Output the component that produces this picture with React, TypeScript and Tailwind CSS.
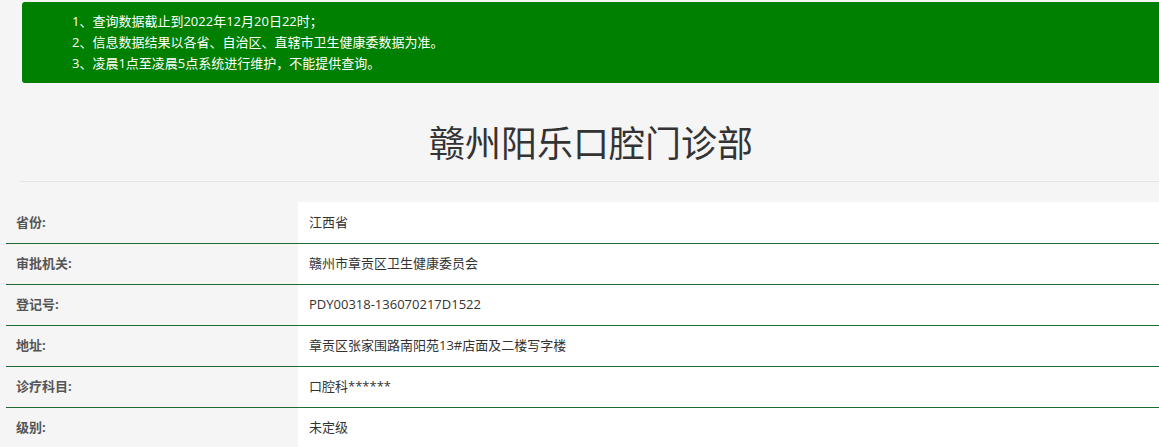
const rows: [string, string][] = [
  ['省份:', '江西省'],
  ['审批机关:', '赣州市章贡区卫生健康委员会'],
  ['登记号:', 'PDY00318-136070217D1522'],
  ['地址:', '章贡区张家围路南阳苑13#店面及二楼写字楼'],
  ['诊疗科目:', '口腔科******'],
  ['级别:', '未定级'],
]

export default function App() {
  return (
    <div
      className="h-[447px] w-[1159px] overflow-hidden bg-[#f5f5f5] text-[#333]"
      style={{ fontFamily: '"Open Sans", "Noto Sans CJK SC", sans-serif' }}
    >
      <div className="ml-[6px] w-[1170px] pt-[2px]">
        <div className="ml-[16px] rounded-[3px] bg-[#008000] pl-[50px] py-[9px] text-[13px] leading-[21px] text-white">
          <p>1、查询数据截止到2022年12月20日22时；</p>
          <p>2、信息数据结果以各省、自治区、直辖市卫生健康委数据为准。</p>
          <p>3、凌晨1点至凌晨5点系统进行维护，不能提供查询。</p>
        </div>
        <h1 className="mt-[33px] text-center text-[36px] leading-[56px] text-[#333]">赣州阳乐口腔门诊部</h1>
        <div className="ml-[14px] mt-[9px] border-t border-[#e5e5e5]" />
        <div className="mt-[20px]">
          {rows.map(([k, v], i) => (
            <div key={k} className={`flex h-[41px] ${i > 0 ? 'border-t border-[#1f6b35]' : ''}`}>
              <div className="flex w-[292px] items-center pl-[10px] text-[13px] font-bold text-[#555]">{k}</div>
              <div className="flex flex-1 items-center bg-white pl-[11px] text-[13px] text-[#333]">{v}</div>
            </div>
          ))}
        </div>
      </div>
    </div>
  )
}
